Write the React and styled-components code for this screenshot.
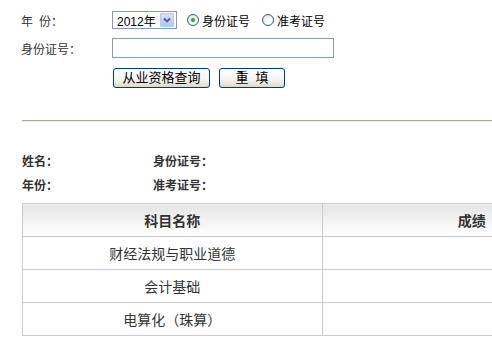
import React from 'react';
import styled, { createGlobalStyle } from 'styled-components';

const GlobalStyle = createGlobalStyle`
  html, body {
    margin: 0;
    padding: 0;
    overflow: hidden;
    background: #fff;
  }
  body {
    font-family: "Liberation Sans", "Noto Sans CJK SC", sans-serif;
    font-size: 12px;
    color: #333;
  }
`;

const Page = styled.div`
  width: 492px;
  height: 354px;
  overflow: hidden;
`;

const Form = styled.div`
  display: flex;
  flex-direction: column;
  padding: 10px 0 0 21px;
`;

const Row = styled.div`
  display: flex;
  align-items: center;
  height: 20px;
  margin-top: ${props => props.$gap || 0}px;
`;

const Label = styled.span`
  width: 91px;
  flex-shrink: 0;
  white-space: pre;
`;

const Select = styled.div`
  width: 65px;
  height: 18px;
  box-sizing: border-box;
  border: 1px solid #7f9db9;
  display: flex;
  align-items: center;
  justify-content: space-between;
  padding: 0 2px 0 4px;
  font-size: 12px;
  color: #000;
  background: #fff;
`;

const Arrow = styled.span`
  width: 14px;
  height: 14px;
  box-sizing: border-box;
  border: 1px solid #b6caf2;
  border-radius: 1px;
  background: linear-gradient(#d4e1fc, #b4c8f6);
  display: flex;
  align-items: center;
  justify-content: center;
`;

const RadioLabel = styled.label`
  display: flex;
  align-items: center;
  margin-left: ${props => props.$gap}px;
  color: #000;
`;

const Radio = styled.span`
  width: 12px;
  height: 12px;
  box-sizing: border-box;
  border-radius: 50%;
  border: 1px solid #2c5e92;
  background: radial-gradient(circle at 65% 65%, #ffffff 20%, #d9d9d2 100%);
  display: flex;
  align-items: center;
  justify-content: center;
  margin-right: 3px;

  &::after {
    content: '';
    width: 4px;
    height: 4px;
    border-radius: 50%;
    background: ${props => (props.$checked ? '#2db12d' : 'transparent')};
    box-shadow: ${props => (props.$checked ? '0 0 1px #6fd86f' : 'none')};
  }
`;

const Input = styled.input`
  width: 222px;
  height: 20px;
  box-sizing: border-box;
  border: 1px solid #7f9db9;
  margin: 0;
  padding: 0 3px;
  outline: none;
`;

const Button = styled.button`
  width: ${props => props.$width}px;
  height: 20px;
  margin: 0 0 0 ${props => props.$gap}px;
  padding: 0;
  box-sizing: border-box;
  border: 1px solid #003c74;
  border-radius: 3px;
  background: linear-gradient(#ffffff 0%, #f4f4ef 60%, #dcd8cc 100%);
  font-family: "Liberation Sans", "Noto Sans CJK SC", sans-serif;
  font-size: 13px;
  line-height: 18px;
  color: #000;
  white-space: pre;
`;

const Divider = styled.div`
  margin: 32px 0 0 22px;
  height: 2px;
  box-sizing: border-box;
  border-top: 1px solid #aca899;
  border-left: 1px solid #c9c4b6;
  border-bottom: 1px solid #f1efe6;
`;

const Info = styled.div`
  display: grid;
  grid-template-columns: 131px auto;
  grid-auto-rows: 24px;
  align-items: center;
  margin-top: 26px;
  padding-left: 22px;
  font-weight: bold;
  color: #333;
`;

const Table = styled.table`
  margin: 7px 0 0 22px;
  width: 600px;
  border-collapse: collapse;
  table-layout: fixed;
  font-size: 14px;
  color: #333;
`;

const HeadCell = styled.th`
  height: 32px;
  padding: 0;
  border: 1px solid #cccccc;
  background: linear-gradient(#e4e4e4 0%, #f4f4f4 55%, #ffffff 100%);
  font-weight: bold;
  text-align: center;
`;

const Cell = styled.td`
  height: 32px;
  padding: 0;
  border: 1px solid #cccccc;
  text-align: center;
`;

const subjects = ['财经法规与职业道德', '会计基础', '电算化（珠算）'];

const App = () => (
  <Page>
    <GlobalStyle />
    <Form>
      <Row>
        <Label>{'年\u2002份：'}</Label>
        <Select>
          2012年
          <Arrow>
            <svg width="8" height="6" viewBox="0 0 8 6">
              <path d="M1 1.5 L4 4.5 L7 1.5" fill="none" stroke="#4d6185" strokeWidth="1.8" />
            </svg>
          </Arrow>
        </Select>
        <RadioLabel $gap={10}>
          <Radio $checked />
          身份证号
        </RadioLabel>
        <RadioLabel $gap={12}>
          <Radio />
          准考证号
        </RadioLabel>
      </Row>
      <Row $gap={8}>
        <Label>身份证号：</Label>
        <Input type="text" />
      </Row>
      <Row $gap={10}>
        <Label />
        <Button $width={97} $gap={1}>从业资格查询</Button>
        <Button $width={66} $gap={9}>{'重  填'}</Button>
      </Row>
    </Form>
    <Divider />
    <Info>
      <span>姓名：</span>
      <span>身份证号：</span>
      <span>年份：</span>
      <span>准考证号：</span>
    </Info>
    <Table>
      <thead>
        <tr>
          <HeadCell>科目名称</HeadCell>
          <HeadCell>成绩</HeadCell>
        </tr>
      </thead>
      <tbody>
        {subjects.map(name => (
          <tr key={name}>
            <Cell>{name}</Cell>
            <Cell />
          </tr>
        ))}
      </tbody>
    </Table>
  </Page>
);

export default App;
